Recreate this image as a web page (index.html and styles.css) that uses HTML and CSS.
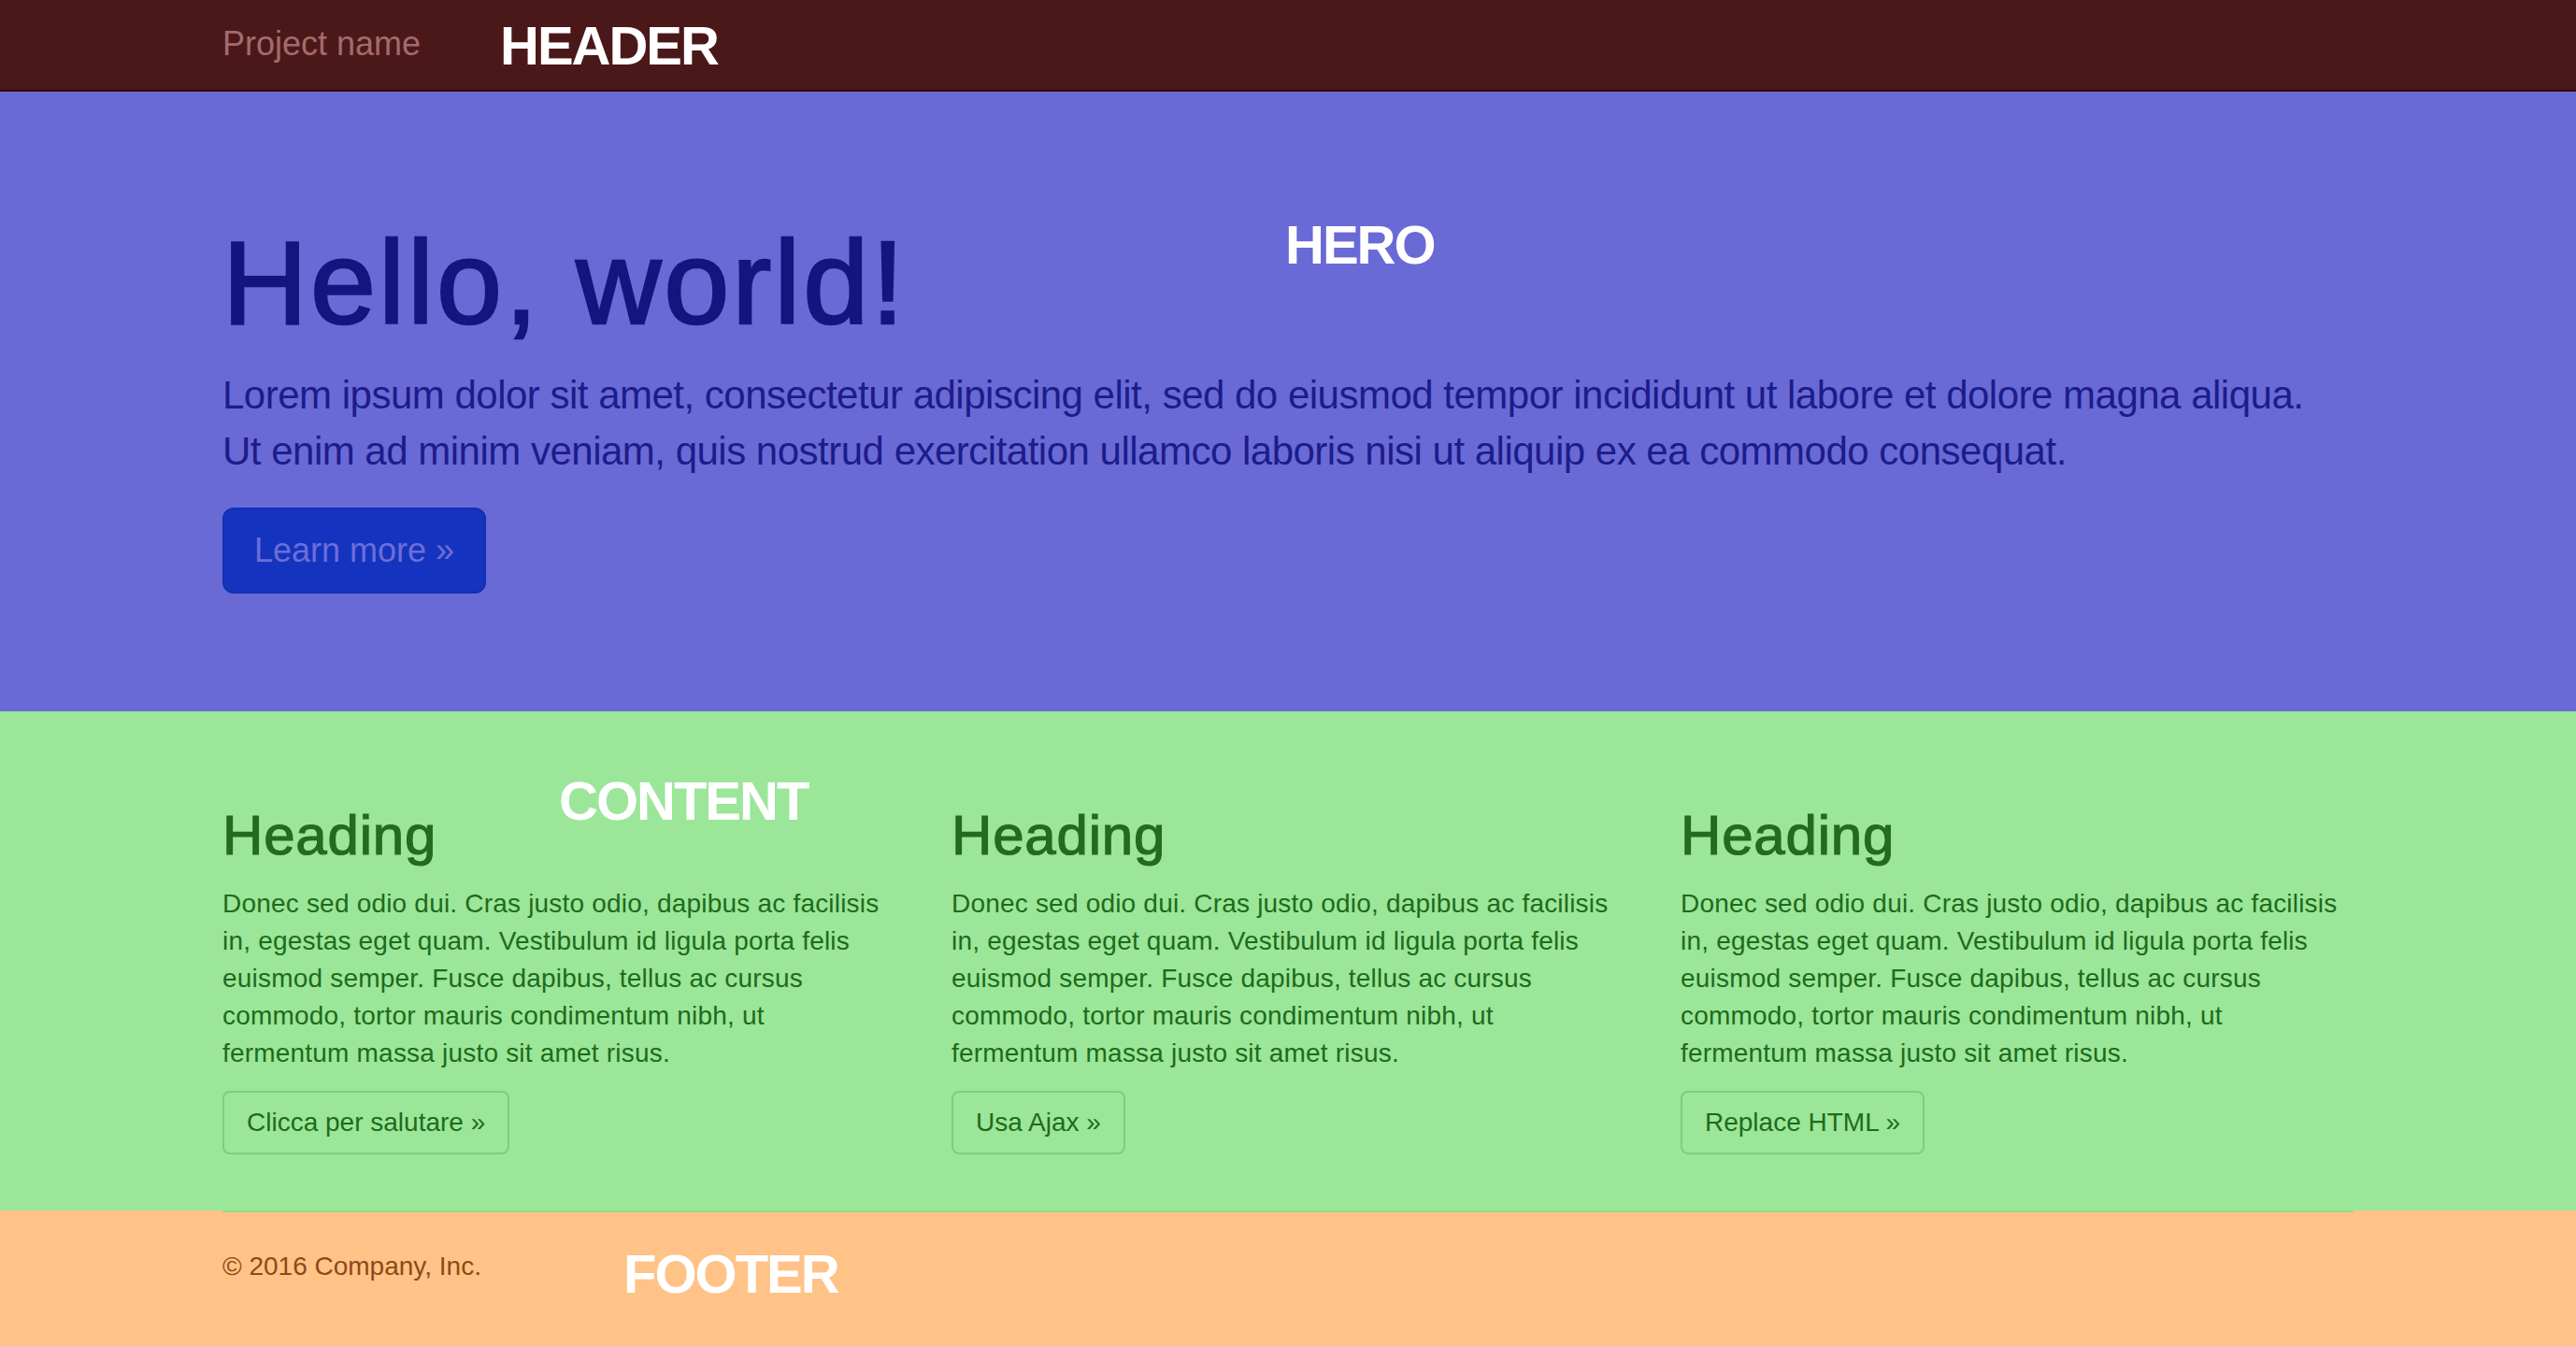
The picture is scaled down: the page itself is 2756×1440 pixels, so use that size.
FILE: index.html
```html
<!DOCTYPE html>
<html lang="en">
<head>
<meta charset="utf-8">
<title>Jumbotron</title>
<link rel="stylesheet" href="styles.css">
</head>
<body>
<header class="site-header">
  <div class="container">
    <a class="brand" href="#">Project name</a>
  </div>
  <span class="zone-label label-header">HEADER</span>
</header>

<section class="hero">
  <div class="container">
    <h1 class="hero-title">Hello, world!</h1>
    <p class="hero-text">Lorem ipsum dolor sit amet, consectetur adipiscing elit, sed do eiusmod tempor incididunt ut labore et dolore magna aliqua.<br>Ut enim ad minim veniam, quis nostrud exercitation ullamco laboris nisi ut aliquip ex ea commodo consequat.</p>
    <p class="hero-actions"><a class="btn-primary" href="#">Learn more &raquo;</a></p>
  </div>
  <span class="zone-label label-hero">HERO</span>
</section>

<section class="content">
  <div class="container columns">
    <div class="column">
      <h2 class="col-title">Heading</h2>
      <p class="col-text">Donec sed odio dui. Cras justo odio, dapibus ac facilisis<br>in, egestas eget quam. Vestibulum id ligula porta felis<br>euismod semper. Fusce dapibus, tellus ac cursus<br>commodo, tortor mauris condimentum nibh, ut<br>fermentum massa justo sit amet risus.</p>
      <p class="col-actions"><a class="btn-default" href="#">Clicca per salutare &raquo;</a></p>
    </div>
    <div class="column">
      <h2 class="col-title">Heading</h2>
      <p class="col-text">Donec sed odio dui. Cras justo odio, dapibus ac facilisis<br>in, egestas eget quam. Vestibulum id ligula porta felis<br>euismod semper. Fusce dapibus, tellus ac cursus<br>commodo, tortor mauris condimentum nibh, ut<br>fermentum massa justo sit amet risus.</p>
      <p class="col-actions"><a class="btn-default" href="#">Usa Ajax &raquo;</a></p>
    </div>
    <div class="column">
      <h2 class="col-title">Heading</h2>
      <p class="col-text">Donec sed odio dui. Cras justo odio, dapibus ac facilisis<br>in, egestas eget quam. Vestibulum id ligula porta felis<br>euismod semper. Fusce dapibus, tellus ac cursus<br>commodo, tortor mauris condimentum nibh, ut<br>fermentum massa justo sit amet risus.</p>
      <p class="col-actions"><a class="btn-default" href="#">Replace HTML &raquo;</a></p>
    </div>
  </div>
  <span class="zone-label label-content">CONTENT</span>
</section>

<footer class="site-footer">
  <div class="container">
    <p class="copyright">&copy; 2016 Company, Inc.</p>
  </div>
  <span class="zone-label label-footer">FOOTER</span>
</footer>
</body>
</html>
```

FILE: styles.css
```css
html, body {
  height: 100%;
}

body {
  margin: 0;
  font-family: "Liberation Sans", Arial, Helvetica, sans-serif;
  display: flex;
  flex-direction: column;
  min-height: 100vh;
  overflow: hidden;
}

a {
  text-decoration: none;
}

.container {
  width: 2340px;
  margin: 0 auto;
  padding: 0 30px;
  box-sizing: border-box;
}

/* labels overlaid on each zone */
.zone-label {
  position: absolute;
  font-family: "Liberation Sans", Arial, sans-serif;
  font-weight: bold;
  font-size: 58px;
  line-height: 58px;
  letter-spacing: -2px;
  color: #ffffff;
  white-space: nowrap;
}

/* header */
.site-header {
  position: relative;
  height: 96px;
  background: #4b1819;
  border-bottom: 2px solid #340406;
  flex: none;
}

.brand {
  display: inline-block;
  padding-top: 27px;
  font-size: 36px;
  line-height: 40px;
  color: #a46b6b;
}

.label-header {
  top: 20px;
  left: 535px;
}

/* hero */
.hero {
  position: relative;
  background: #696ad5;
  padding: 96px 0;
  flex: none;
}

.hero-title {
  margin: 40px 0 20px;
  font-size: 126px;
  line-height: 138.6px;
  font-weight: normal;
  letter-spacing: 3px;
  color: #15157f;
  -webkit-text-stroke: 2.5px #15157f;
}

.hero-text {
  margin: 0 0 30px;
  font-size: 42px;
  line-height: 60px;
  letter-spacing: -0.5px;
  color: #1c1c8b;
  white-space: nowrap;
}

.hero-actions {
  margin: 0 0 30px;
  line-height: 0;
}

.btn-primary {
  display: inline-block;
  padding: 20px 32px;
  font-size: 36px;
  line-height: 48px;
  color: #6d6dd9;
  background: #1434bf;
  border: 2px solid #1230b2;
  border-radius: 12px;
}

.label-hero {
  top: 135px;
  left: 1375px;
}

/* content */
.content {
  position: relative;
  background: #9be698;
  padding: 60px 0 40px;
  flex: none;
}

.columns {
  display: grid;
  grid-template-columns: repeat(3, 720px);
  column-gap: 60px;
}

.col-title {
  margin: 40px 0 20px;
  font-size: 60px;
  line-height: 66px;
  font-weight: normal;
  letter-spacing: 0.8px;
  color: #236b21;
  -webkit-text-stroke: 1.2px #236b21;
}

.col-text {
  margin: 0 0 20px;
  font-size: 28px;
  line-height: 40px;
  letter-spacing: 0.2px;
  color: #1e6b1d;
  white-space: nowrap;
}

.col-actions {
  margin: 0 0 20px;
  line-height: 0;
}

.btn-default {
  display: inline-block;
  padding: 12px 24px;
  font-size: 28px;
  line-height: 40px;
  color: #1e6b1d;
  border: 2px solid #80cc7e;
  border-radius: 8px;
}

.label-content {
  top: 67px;
  left: 598px;
}

/* footer */
.site-footer {
  position: relative;
  background: #ffc287;
  flex: 1;
}

.copyright {
  margin: 0 0 20px;
  padding-top: 38px;
  border-top: 2px solid #96dc8f;
  font-size: 28px;
  line-height: 40px;
  color: #8b4b16;
}

.label-footer {
  top: 39px;
  left: 667px;
}
```
